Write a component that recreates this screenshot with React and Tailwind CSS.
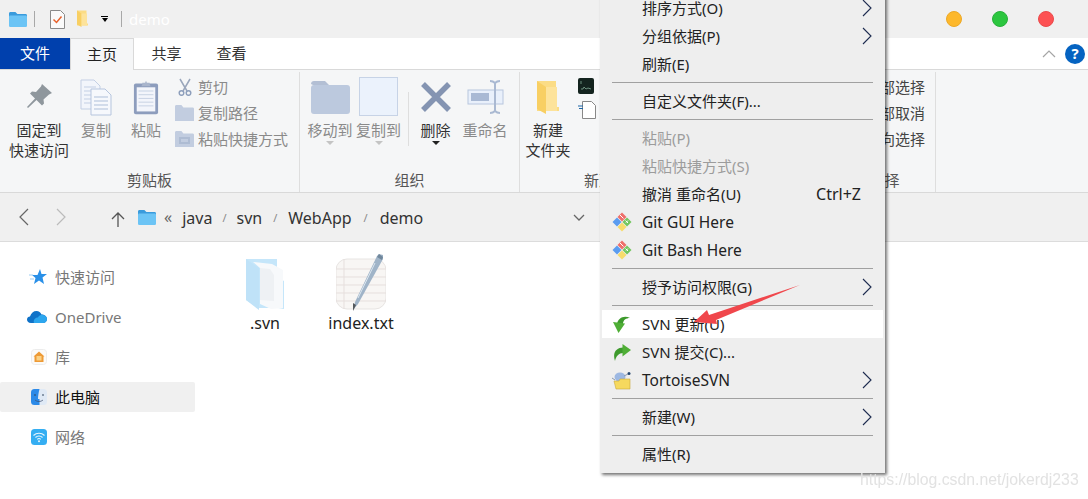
import React from 'react';

const FolderIcon = ({ className, back = '#3a9bdc', front = '#6cc4f5' }) => (
  <svg viewBox="0 0 20 17" className={className}>
    <path d="M1 2.5C1 1.7 1.6 1 2.4 1h5l2 2h8.2c.8 0 1.4.6 1.4 1.4V6H1z" fill={back} />
    <rect x="1" y="4.5" width="18" height="11.5" rx="1.2" fill={front} />
  </svg>
);

const Pin = () => (
  <svg viewBox="0 0 28 28" className="w-[28px] h-[28px] mb-[5px]">
    <path d="M17 1l10 9-3 1.5-5.5 5 .5 4-2 2-5.5-5.5L3 25l-1-1 8-8.500-5-5 2-2 4 .5 5-5.500z" fill="#8f979d" />
  </svg>
);

const Pages = () => (
  <svg viewBox="0 0 32 37" className="w-[32px] h-[37px]">
    <path d="M1 1h13l6 6v23H1z" fill="#f2f5fb" stroke="#c3cfe4" />
    <path d="M4 8h12M4 12h12M4 16h12M4 20h12M4 24h12" stroke="#c3cfe4" />
    <path d="M11 10h14l6 6v20H11z" fill="#f6f8fc" stroke="#b6c5de" />
    <path d="M14 18h14M14 22h14M14 26h14M14 30h14" stroke="#aebfd9" />
  </svg>
);

const Clipboard = () => (
  <svg viewBox="0 0 28 38" className="w-[26px] h-[37px]">
    <rect x="1" y="4" width="26" height="33" rx="2" fill="#8d9dbd" />
    <rect x="4" y="8" width="20" height="26" fill="#f3f5fb" />
    <path d="M6 12h16M6 16h16M6 20h16M6 24h16M6 28h16" stroke="#c5cfe2" />
    <path d="M10 5V3h3l1-2 1 2h3v2l1 2H9z" fill="#a9b5cc" />
  </svg>
);

const Scissors = () => (
  <svg viewBox="0 0 14 18" className="w-[14px] h-[18px] ml-[3px]" fill="none" stroke="#9aa6bb" strokeWidth="1.500">
    <path d="M2 1l7 12M12 1L5 13" />
    <circle cx="3.500" cy="15" r="2.300" stroke="#8e9fbc" />
    <circle cx="10.500" cy="15" r="2.300" stroke="#8e9fbc" />
  </svg>
);

const FolderGray = ({ inner }) => (
  <svg viewBox="0 0 19 16" className="w-[19px] h-[16px]">
    <path d="M0 1.500C0 .7.600 0 1.400 0h5l2 2.500h9.200c.8 0 1.400.6 1.400 1.400V16H0z" fill="#c2cde0" />
    {inner && <rect x="4" y="6" width="11" height="7" fill="#aebcd3" />}
    {inner && <rect x="6" y="8" width="7" height="3" fill="#c2cde0" />}
  </svg>
);

const MoveFolder = () => (
  <svg viewBox="0 0 39 33" className="w-[39px] h-[33px] mb-[2px]">
    <path d="M0 3C0 1.300 1.300 0 3 0h11l4 4H2z" fill="#b3bfd4" />
    <rect x="0" y="4" width="39" height="29" rx="3" fill="#bcc9de" />
  </svg>
);

const BigX = () => (
  <svg viewBox="0 0 32 32" className="w-[32px] h-[32px] mb-[3px]">
    <path d="M3 3l26 26M29 3L3 29" stroke="#8494b2" strokeWidth="5.500" />
  </svg>
);

const Rename = () => (
  <svg viewBox="0 0 37 34" className="w-[37px] h-[34px] mb-[2px]">
    <rect x="1" y="10" width="35" height="14" fill="#e9f0fb" stroke="#b8c6de" />
    <rect x="4" y="13" width="18" height="8" fill="#a9b9d4" />
    <path d="M23 1c3 0 4 1 5 2 1-1 2-2 5-2M28 3v28M23 33c3 0 4-1 5-2 1 1 2 2 5 2" fill="none" stroke="#aab9d2" strokeWidth="2" />
  </svg>
);

const YellowFolder = ({ className }) => (
  <svg viewBox="0 0 24 36" className={className}>
    <path d="M1 1h19v26h3v4H1z" fill="#fbdc85" />
    <path d="M1 1l9 6v27l-9-5z" fill="#f8cf63" />
    <path d="M10 7h11v24H10z" fill="#fde39b" />
  </svg>
);

const MenuArrow = () => (
  <svg viewBox="0 0 10 18" className="w-[10px] h-[18px]" fill="none">
    <path d="M1 1l8 8-8 8" stroke="#1d2b4f" strokeWidth="1.100" />
  </svg>
);

const GitIcon = () => (
  <svg viewBox="0 0 20 20" className="w-[20px] h-[20px]">
    <path d="M.5 10L5 5.500 9.500 10 5 14.500z" fill="#5b9cf0" />
    <path d="M5.500 5L10 .5 14.500 5 10 9.500z" fill="#ee6f6a" />
    <path d="M10.500 10L15 5.500 19.500 10 15 14.500z" fill="#72c65f" />
    <path d="M5.500 15l4.500-4.500 4.500 4.500L10 19.500z" fill="#f7dc6c" />
    <path d="M8 3l3.500 3.500M13.500 8.500l2.500 2.500M16 8.500l-2 2" stroke="#fff" strokeWidth="1" />
  </svg>
);

const SvnUpdate = () => (
  <svg viewBox="0 0 18 17" className="w-[18px] h-[17px]">
    <path d="M4 8C5 2 11-1 17 2c-4 0-7 2-7 6z" fill="#3d9a2c" />
    <path d="M0 6l12 1.500L5.500 17z" fill="#4fae36" />
  </svg>
);

const SvnCommit = () => (
  <svg viewBox="0 0 18 17" className="w-[18px] h-[17px]">
    <path d="M10 3.500C4 3.500-1 8 2 17c1-5 4-8 8-8z" fill="#3d9a2c" />
    <path d="M9.500 0L18 6l-8.500 6.500z" fill="#4fae36" />
  </svg>
);

const TortoiseIcon = () => (
  <svg viewBox="0 0 20 19" className="w-[20px] h-[19px]">
    <ellipse cx="8" cy="6" rx="5.500" ry="4.500" fill="#9db8e2" />
    <path d="M2 10h5l1-2h10v10H4z" fill="#f6d95e" stroke="#c9a93a" strokeWidth=".6" />
    <circle cx="17" cy="2.500" r="1.500" fill="#24466f" />
    <path d="M0 7l3 2M12 5l4-2" stroke="#8a98ad" />
  </svg>
);

const QuickStar = () => (
  <svg viewBox="0 0 18 16" className="w-[18px] h-[16px]">
    <path d="M11 0l1.500 5H18l-4.500 3.500L15 15l-5-3.500L5 15l1.500-6L3 6h5.500z" fill="#2a90e8" />
    <path d="M0 6h4M1 10h4" stroke="#9ccdf3" />
  </svg>
);

const OneDrive = () => (
  <svg viewBox="0 0 20 14" className="w-[20px] h-[14px]">
    <path d="M4 13C1 13 0 11 0 9.500 0 7.500 1.500 6.500 3 6.500 4 3 6.500 1 9.500 1c2.500 0 4 1.500 5 3.500 3 0 5.500 2 5.500 4.500 0 2.500-2 4-4 4z" fill="#0f72c8" />
    <path d="M7 13c-1-3 1-5.500 4-5.500 1-2 3-3 5-2.500 2.500.5 4 2 4 4 0 2.500-2 4-4 4z" fill="#2ca6ee" />
  </svg>
);

const HomeIcon = () => (
  <svg viewBox="0 0 16 16" className="w-[16px] h-[16px]">
    <rect x=".5" y=".5" width="15" height="15" rx="3" fill="#fbfaf8" stroke="#ececec" />
    <path d="M8 2.500l5.500 5H12.500v5.500h-9V7.500H2.500z" fill="#ee9a35" />
    <rect x="5.500" y="7" width="5" height="4.500" fill="#fbd185" />
  </svg>
);

const FinderIcon = () => (
  <svg viewBox="0 0 16 16" className="w-[16px] h-[16px]">
    <rect width="16" height="16" rx="3.500" fill="#dfe9f5" />
    <path d="M3.500 0H8.500C7.500 4 7 7 7 10H8.500V16H3.500A3.500 3.500 0 0 1 0 12.500V3.500A3.500 3.500 0 0 1 3.500 0z" fill="#2c8ae8" />
    <path d="M4 5v2M12 5v2" stroke="#33465f" strokeWidth="1" />
    <path d="M4 11c2.500 2 5.500 2 8 0" fill="none" stroke="#3c4f70" strokeWidth=".7" />
  </svg>
);

const WifiIcon = () => (
  <svg viewBox="0 0 16 16" className="w-[16px] h-[16px]">
    <rect width="16" height="16" rx="3.500" fill="#35aef2" />
    <path d="M2.500 6.500c3-3 8-3 11 0M4.500 8.500c2-2 5-2 7 0M6.300 10.300c1-1 2.400-1 3.400 0" fill="none" stroke="#e8f6fe" strokeWidth="1.100" />
    <circle cx="8" cy="12.200" r="1" fill="#e8f6fe" />
  </svg>
);

const SvnFolder = () => (
  <svg viewBox="0 0 40 54" className="w-[40px] h-[54px]">
    <path d="M1 1h31v18l7 4v28l-6-1H14L1 42z" fill="#c5e6fa" />
    <path d="M8 4l19 2 11 6v38l-12 1-11-5V10z" fill="#f7f9fb" />
    <path d="M15 10l10 1 4 6v26l-14-1z" fill="#eef1f4" />
    <path d="M1 1l13 9v42L1 42z" fill="#bfe2f8" />
  </svg>
);

const TextFile = () => (
  <svg viewBox="0 0 50 58" className="w-[50px] h-[58px]">
    <rect x="0" y="5" width="50" height="50" rx="11" fill="#f8f6f4" stroke="#e7e4e2" />
    <path d="M0 15h50M0 23h50M0 31h50M0 39h50M0 47h50M8 5v50" stroke="#e6dfdd" />
    <path d="M47 1l-4-1-2 2-22 46-2 8 5-6L47 5z" fill="#a0b4c8" />
    <path d="M43 0l4 3-1 3-5-3z" fill="#70879c" />
    <path d="M17 49l3 2-3 6z" fill="#54585c" />
    <path d="M39 9L22 44" stroke="#dce7f0" />
  </svg>
);

const Large = ({ width, icon, label, sub, muted, caret, faded }) => (
  <div className={`${width} flex flex-col items-center shrink-0`}>
    <div className="h-[44px] flex items-end justify-center">{icon}</div>
    <div className={`mt-[4px] leading-[20px] whitespace-nowrap ${muted ? 'text-[#8a8a8a]' : 'text-[#333]'}`}>{label}</div>
    {sub && <div className={`leading-[20px] whitespace-nowrap ${muted ? 'text-[#8a8a8a]' : 'text-[#333]'}`}>{sub}</div>}
    {caret && (
      <div className={`mt-[1px] w-0 h-0 border-x-[4px] border-x-transparent border-t-[4px] ${faded ? 'border-t-[#c4c4c4]' : 'border-t-[#222]'}`} />
    )}
  </div>
);

const Small = ({ icon, label }) => (
  <div className="h-[26px] flex items-center whitespace-nowrap text-[#8a8a8a]">
    <div className="w-[23px] flex justify-start">{icon}</div>
    {label}
  </div>
);

const Group = ({ width, label, border = true, children }) => (
  <div className={`${width} shrink-0 flex flex-col h-full ${border ? 'border-r border-[#dedede]' : ''}`}>
    <div className="flex-1 flex">{children}</div>
    <div className="h-[24px] text-center text-[#555] leading-[24px] whitespace-nowrap">{label}</div>
  </div>
);

const Slash = ({ className }) => <span className={`text-[#888] text-[11px] ${className}`}>/</span>;

const SideRow = ({ icon, label, active }) => (
  <div className={`h-[30px] flex items-center rounded-[2px] ${active ? 'bg-[#f0f0f0] text-[#111]' : 'text-[#777]'}`}>
    <div className="w-[55px] flex justify-end pr-[8px] shrink-0">{icon}</div>
    {label}
  </div>
);

const MenuSep = () => (
  <div className="h-[9px] flex items-center px-[12px]">
    <div className="h-px w-full bg-[#a0a0a0]" />
  </div>
);

const MenuItem = ({ label, icon, arrow, shortcut, disabled, active, latin }) => (
  <div className={`h-[28px] flex items-center mx-[2px] ${active ? 'bg-white' : ''} ${disabled ? 'text-[#9c9c9c]' : 'text-[#222]'}`}>
    <div className="w-[40px] shrink-0 flex justify-center">{icon}</div>
    <span className={`whitespace-nowrap leading-[16px] ${latin ? 'text-[15.500px]' : ''}`}>{label}</span>
    <span className="ml-auto mr-[22px] text-[16px] leading-[16px]">{shortcut}</span>
    {arrow && <span className="mr-[11px] -ml-[22px] flex"><MenuArrow /></span>}
  </div>
);

export default function App() {
  return (
    <div className="relative w-[1088px] h-[499px] overflow-hidden bg-white text-[15px] [font-family:'Noto_Sans','Noto_Sans_CJK_SC',sans-serif]">
      {/* title bar */}
      <div className="h-[38px] bg-[#f0f0f0] flex items-center">
        <FolderIcon className="ml-[8px] w-[20px] h-[17px]" />
        <div className="ml-[6px] w-px h-[16px] bg-[#a8a8a8]" />
        <svg viewBox="0 0 15 19" className="ml-[15px] w-[15px] h-[19px]">
          <path d="M.5.5h10l4 4v14H.5z" fill="#fafafa" stroke="#8a8a8a" />
          <path d="M3.500 9.500l3 3 5-6" fill="none" stroke="#e8622c" strokeWidth="1.500" />
        </svg>
        <YellowFolder className="ml-[11px] w-[13px] h-[18px]" />
        <div className="ml-[12px] flex flex-col items-center">
          <div className="w-[7px] h-px bg-black mb-[1px]" />
          <div className="w-0 h-0 border-x-[3.500px] border-x-transparent border-t-[4px] border-t-black" />
        </div>
        <div className="ml-[13px] w-px h-[16px] bg-[#a8a8a8]" />
        <span className="ml-[7px] text-white">demo</span>
        <div className="ml-auto flex gap-[30px] mr-[34px]">
          <div className="w-[16px] h-[16px] rounded-full bg-[#fdb82c] border border-[#eda826]" />
          <div className="w-[16px] h-[16px] rounded-full bg-[#2cc63f] border border-[#28b03a]" />
          <div className="w-[16px] h-[16px] rounded-full bg-[#fd5153] border border-[#ea4a4b]" />
        </div>
      </div>

      {/* tabs */}
      <div className="h-[32px] bg-white border-b border-[#d9d9d9] flex items-stretch text-[#333]">
        <div className="w-[70px] h-[31px] bg-[#0040ad] text-white flex items-center justify-center">文件</div>
        <div className="w-[64px] h-[32px] bg-[#f5f6f7] border-x border-t border-[#d9d9d9] flex items-center justify-center text-[#222]">主页</div>
        <div className="w-[65px] flex items-center justify-center">共享</div>
        <div className="w-[65px] flex items-center justify-center">查看</div>
        <div className="ml-auto flex items-center mr-[3px]">
          <svg viewBox="0 0 14 8" className="w-[14px] h-[8px] mr-[9px]" fill="none">
            <path d="M1 7l6-6 6 6" stroke="#a5a5a5" strokeWidth="1.200" />
          </svg>
          <div className="w-[20px] h-[20px] rounded-full bg-[#0563c1] text-white text-[15px] font-bold flex items-center justify-center">?</div>
        </div>
      </div>

      {/* ribbon */}
      <div className="h-[123px] bg-[#f5f6f7] border-b border-[#d9d9d9] flex pt-[2px] text-[#555]">
        <Group width="w-[300px]" label="剪贴板">
          <div className="flex">
            <Large width="w-[78px]" icon={<Pin />} label="固定到" sub="快速访问" />
            <Large width="w-[36px]" icon={<Pages />} label="复制" muted />
            <div className="w-[3px]" />
            <Large width="w-[58px]" icon={<Clipboard />} label="粘贴" muted />
            <div className="pt-[2px]">
              <Small icon={<Scissors />} label="剪切" />
              <Small icon={<FolderGray />} label="复制路径" />
              <Small icon={<FolderGray inner />} label="粘贴快捷方式" />
            </div>
          </div>
        </Group>
        <Group width="w-[220px]" label="组织">
          <div className="flex pl-[6px]">
            <Large width="w-[48px]" icon={<MoveFolder />} label="移动到" muted caret faded />
            <Large width="w-[49px]" icon={<div className="w-[39px] h-[39px] bg-[#ebf2fc] border border-[#c7d3e6]" />} label="复制到" muted caret faded />
            <div className="ml-[5px] w-px h-[54px] mt-[20px] bg-[#dedede]" />
            <Large width="w-[53px]" icon={<BigX />} label="删除" caret />
            <Large width="w-[46px]" icon={<Rename />} label="重命名" muted />
          </div>
        </Group>
        <Group width="w-[158px]" border={false} label="新建">
          <div className="flex">
            <Large width="w-[56px]" icon={<YellowFolder className="w-[24px] h-[36px]" />} label="新建" sub="文件夹" />
            <div className="flex flex-col gap-[7px] ml-[2px] pt-[6px]">
              <svg viewBox="0 0 16 16" className="w-[16px] h-[16px]">
                <rect width="16" height="16" rx="2" fill="#14241f" />
                <path d="M3 3v3M3 11h2l1-2 2 2 2-1 3 1" fill="none" stroke="#6b8f7e" />
              </svg>
              <svg viewBox="0 0 18 18" className="w-[18px] h-[18px]">
                <path d="M4.500.5h9l4 4v13h-13z" fill="#fff" stroke="#888" />
                <path d="M0 5h5M1 7.500h4" stroke="#1d66a8" />
              </svg>
            </div>
          </div>
        </Group>
        <div className="w-[156px] shrink-0" />
        <Group width="w-[102px]" label="选择">
          <div className="ml-auto pr-[10px] pt-[2px] text-[#444] whitespace-nowrap leading-[26px]">
            <div>全部选择</div>
            <div>全部取消</div>
            <div>反向选择</div>
          </div>
        </Group>
      </div>

      {/* address bar */}
      <div className="h-[49px] bg-[#f0f0f0] border-b border-[#dcdcdc] flex items-center text-[16px] text-[#333]">
        <svg viewBox="0 0 12 18" className="ml-[18px] w-[12px] h-[18px]" fill="none">
          <path d="M10 1L2 9l8 8" stroke="#666" strokeWidth="1.200" />
        </svg>
        <svg viewBox="0 0 12 18" className="ml-[25px] w-[12px] h-[18px]" fill="none">
          <path d="M2 1l8 8-8 8" stroke="#bbb" strokeWidth="1.200" />
        </svg>
        <svg viewBox="0 0 14 16" className="ml-[44px] mt-[3px] w-[14px] h-[16px]" fill="none">
          <path d="M7 16V2M1 8l6-6 6 6" stroke="#555" strokeWidth="1.300" />
        </svg>
        <FolderIcon className="ml-[12px] w-[20px] h-[17px]" />
        <span className="ml-[7px] text-[#666]">«</span>
        <div className="ml-[10px] mt-[2px] flex items-center">
          <span>java</span>
          <Slash className="mx-[10px]" />
          <span>svn</span>
          <Slash className="mx-[11px]" />
          <span>WebApp</span>
          <Slash className="mx-[12px]" />
          <span>demo</span>
        </div>
        <svg viewBox="0 0 12 7" className="ml-[150px] w-[12px] h-[7px]" fill="none">
          <path d="M1 1l5 5 5-5" stroke="#666" strokeWidth="1.300" />
        </svg>
      </div>

      {/* main */}
      <div className="flex">
        <div className="w-[195px] shrink-0 pt-[20px] flex flex-col gap-[10px]">
          <SideRow icon={<QuickStar />} label="快速访问" />
          <SideRow icon={<OneDrive />} label="OneDrive" />
          <SideRow icon={<HomeIcon />} label="库" />
          <SideRow icon={<FinderIcon />} label="此电脑" active />
          <SideRow icon={<WifiIcon />} label="网络" />
        </div>
        <div className="flex pl-[22px] pt-[11px] text-[16px] text-[#222]">
          <div className="w-[96px] flex flex-col items-center">
            <div className="h-[59px] flex items-end"><SvnFolder /></div>
            <div className="mt-[1px] leading-[20px]">.svn</div>
          </div>
          <div className="w-[96px] flex flex-col items-center">
            <div className="h-[59px] flex items-end"><TextFile /></div>
            <div className="mt-[1px] leading-[20px]">index.txt</div>
          </div>
        </div>
      </div>

      {/* context menu */}
      <div className="absolute left-[600px] top-[-6px] w-[285px] h-[479px] bg-[#eeeeee] shadow-[2px_2px_3px_rgba(0,0,0,0.55)]">
        <MenuItem label="排序方式(O)" arrow />
        <MenuItem label="分组依据(P)" arrow />
        <MenuItem label="刷新(E)" />
        <MenuSep />
        <MenuItem label="自定义文件夹(F)..." />
        <MenuSep />
        <MenuItem label="粘贴(P)" disabled />
        <MenuItem label="粘贴快捷方式(S)" disabled />
        <MenuItem label="撤消 重命名(U)" shortcut="Ctrl+Z" />
        <MenuItem label="Git GUI Here" icon={<GitIcon />} latin />
        <MenuItem label="Git Bash Here" icon={<GitIcon />} latin />
        <MenuSep />
        <MenuItem label="授予访问权限(G)" arrow />
        <MenuSep />
        <MenuItem label="SVN 更新(U)" icon={<SvnUpdate />} active />
        <MenuItem label="SVN 提交(C)..." icon={<SvnCommit />} />
        <MenuItem label="TortoiseSVN" icon={<TortoiseIcon />} arrow latin />
        <MenuSep />
        <MenuItem label="新建(W)" arrow />
        <MenuSep />
        <MenuItem label="属性(R)" />
      </div>

      {/* red annotation arrow */}
      <svg viewBox="0 0 110 42" className="absolute left-[692px] top-[283px] w-[110px] h-[42px]">
        <path d="M2 39L15 27l2 5L108 2 24 37l1 4z" fill="#f0474c" />
      </svg>

      {/* watermark */}
      <div className="absolute left-[860px] top-[471px] text-[15.800px] leading-[18px] text-[#e2e2e2] whitespace-nowrap [font-family:'Liberation_Sans',sans-serif] blur-[0.4px]">https://blog.csdn.net/jokerdj233</div>
    </div>
  );
}
